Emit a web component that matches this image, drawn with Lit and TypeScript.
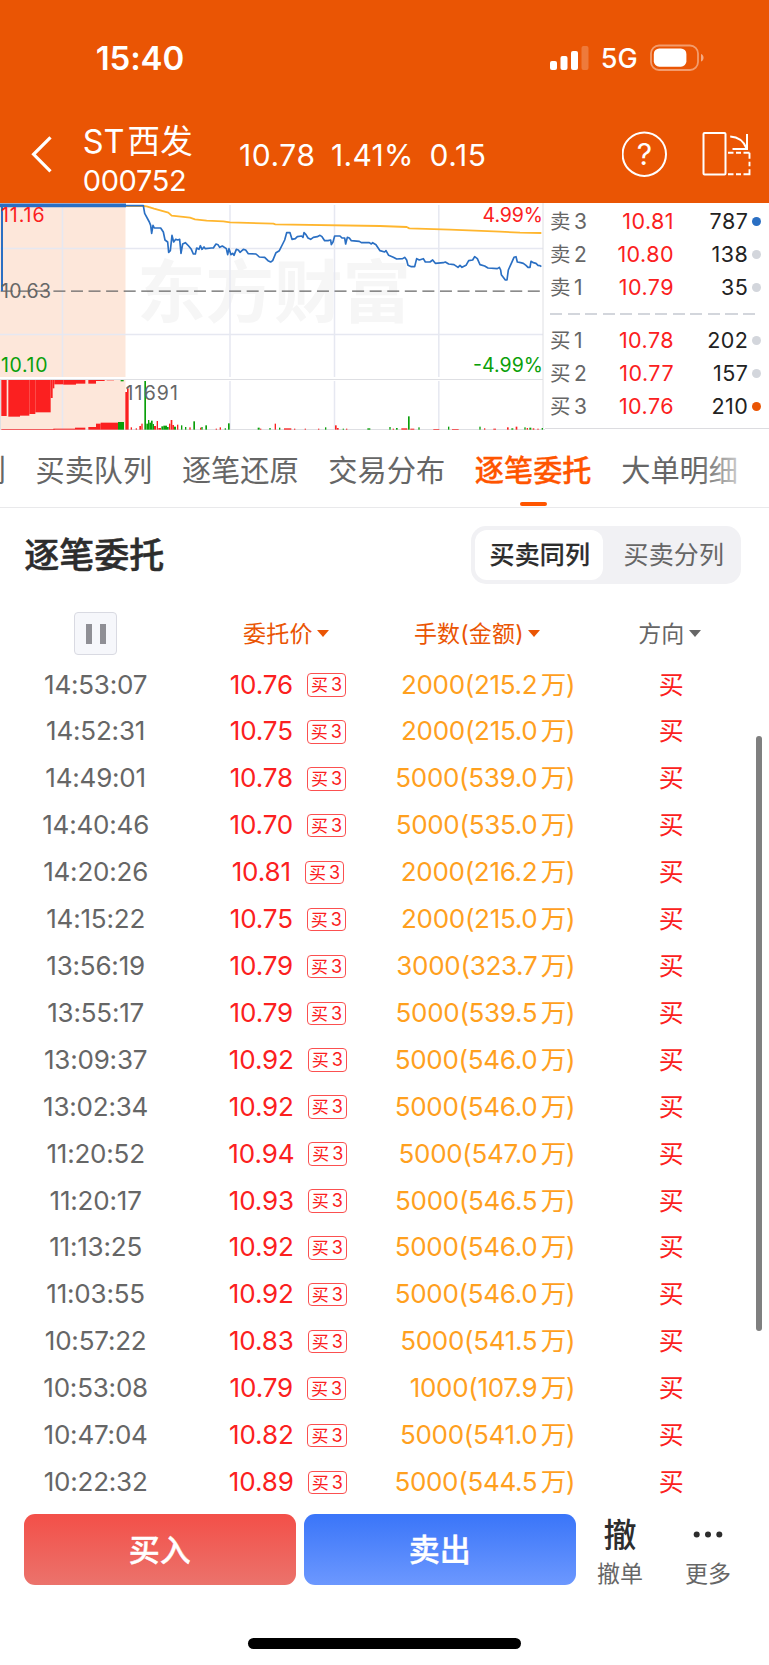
import { LitElement, html, css, svg } from "lit";
import { customElement, property } from "lit/decorators.js";
import { classMap } from "lit/directives/class-map.js";

const RED = "#fb2020";
const GREEN = "#0a9f0a";

const PRICE_LINE =
  "378,17 430,17 434,40 448,66 452,76 455,100 459,76 463,84 482,84 490,96 495,120 503,126 506,157 511,152 516,106 521,126 527,118 534,120 539,118 543,160 548,132 556,128 566,138 574,148 580,162 586,162 590,144 597,148 601,137 606,148 612,141 616,146 634,144 640,144 648,132 654,134 659,142 667,138 679,146 683,164 687,146 693,164 698,160 702,166 709,148 715,150 720,157 730,148 737,150 745,161 768,162 778,171 794,172 804,182 812,186 818,182 828,158 838,152 848,132 854,120 860,98 870,98 876,118 886,116 892,110 905,108 909,112 912,98 918,104 924,114 932,118 940,112 952,110 960,106 966,110 974,122 984,122 992,120 994,134 999,126 1004,108 1020,108 1026,114 1034,114 1037,132 1042,112 1048,114 1054,122 1078,124 1084,128 1108,128 1114,132 1118,128 1128,134 1140,152 1154,156 1158,152 1166,166 1180,172 1190,177 1208,176 1214,172 1220,180 1224,196 1234,200 1244,200 1250,176 1258,180 1270,176 1276,186 1290,186 1298,180 1306,190 1330,188 1336,186 1346,192 1362,194 1374,202 1380,196 1386,202 1398,196 1406,182 1418,180 1424,170 1432,176 1440,194 1454,198 1464,204 1492,206 1498,202 1502,210 1504,224 1516,240 1521,240 1525,210 1534,190 1542,172 1548,170 1552,186 1562,188 1570,190 1578,196 1584,202 1590,202 1593,184 1600,188 1608,190 1614,196 1620,197 1624,200";
const AVG_LINE =
  "378,18 430,18 440,19 462,26 505,38 515,47 570,53 585,58 620,62 670,64 690,67 820,71 826,73 1140,78 1220,81 1228,85 1350,89 1500,95 1560,98 1624,99";

/* Auction volume hanging from the top edge: x, width, bottom */
const HANGING: [number, number, number][] = [
  [4, 16, 648], [25, 35, 650], [60, 28, 647], [88, 18, 642], [106, 46, 637], [152, 6, 594],
  [158, 5, 565], [163, 27, 553], [190, 38, 554], [228, 28, 551], [265, 23, 551], [288, 26, 543], [320, 22, 541],
];
/* Volume bars standing on the base line: x, width, top, up? */
const STANDING: [number, number, number, number][] = [
  [4, 160, 687, 1], [160, 65, 686, 1], [225, 31, 683, 1], [265, 23, 681, 1], [288, 14, 671, 1], [302, 52, 668, 1],
  [354, 18, 666, 0], [376, 5, 576, 1], [381, 5, 565, 1], [392, 4, 682, 1], [407, 4, 685, 1], [418, 5, 678, 1],
  [424, 4, 671, 1], [433, 5, 543, 0], [439, 5, 671, 0], [444, 4, 660, 0], [448, 5, 668, 0], [453, 5, 662, 0],
  [458, 4, 672, 0], [462, 6, 678, 1], [470, 4, 663, 1], [475, 8, 684, 1], [484, 6, 679, 0], [490, 11, 677, 0],
  [501, 5, 681, 0], [507, 4, 671, 1], [512, 5, 660, 1], [517, 5, 675, 1], [522, 6, 680, 0], [531, 4, 674, 1],
  [543, 4, 676, 0], [555, 4, 681, 0], [568, 4, 682, 1], [580, 5, 664, 0], [600, 4, 683, 1], [604, 4, 681, 0],
  [616, 5, 676, 0], [647, 4, 686, 1], [659, 4, 682, 1], [674, 4, 685, 0], [684, 5, 670, 0], [773, 6, 683, 0],
  [780, 4, 686, 1], [808, 4, 684, 0], [824, 4, 671, 1], [837, 4, 683, 0], [852, 22, 685, 1], [882, 4, 686, 1],
  [914, 4, 686, 1], [954, 4, 686, 1], [975, 4, 682, 0], [1005, 5, 676, 1], [1011, 5, 684, 1], [1028, 4, 686, 0],
  [1038, 4, 686, 1], [1102, 9, 685, 0], [1168, 4, 681, 0], [1178, 4, 686, 1], [1188, 5, 684, 0], [1204, 18, 685, 1],
  [1224, 5, 649, 0], [1231, 12, 686, 1], [1255, 4, 682, 0], [1300, 18, 687, 1], [1344, 4, 680, 0], [1356, 20, 687, 1],
  [1438, 4, 680, 0], [1452, 4, 685, 1], [1480, 8, 686, 1], [1521, 5, 682, 1], [1534, 6, 685, 0], [1547, 5, 680, 1],
  [1573, 4, 682, 0], [1580, 4, 684, 1], [1588, 6, 683, 0], [1598, 5, 685, 1], [1612, 4, 686, 1], [1625, 4, 684, 0],
];

const shared = css`
  :host {
    font-family: Inter, "Noto Sans CJK SC", sans-serif;
    font-weight: 400;
    white-space: nowrap;
  }
`;

@customElement("status-header")
class StatusHeader extends LitElement {
  static styles = [shared, css`
    :host { display: block; height: 203px; background: #ea5504; color: #fff; }
    .status { display: flex; align-items: center; height: 115px; padding-left: 95.7px; font: 600 33px/40px Inter; letter-spacing: -0.1px; }
    .clock { width: 454.500px; }
    .net { font: 500 27px/34px Inter; margin-left: 11.500px; width: 49.3px; letter-spacing: 0; padding-top: 2px; }
    .nav { display: flex; height: 88px; }
    .back { padding: 20px 0 0 31px; width: 51.7px; }
    .name { width: 156.3px; padding-top: 6.8px; }
    .stock { font-size: 32.500px; line-height: 40px; }
    .cjk { margin-left: 3px; letter-spacing: 0.3px; }
    .code { font-size: 29px; line-height: 38.500px; letter-spacing: -0.35px; }
    .figures { display: flex; width: 383px; font-size: 30px; line-height: 80px; letter-spacing: 0.6px; }
    .f1 { width: 92px; }
    .f2 { width: 98.5px; letter-spacing: 0.3px; }
    .icons { padding-top: 14px; }
  `];
  render() {
    return html`
      <div class="status">
        <div class="clock">15:40</div>
        <svg width="39" height="26" viewBox="0 0 39 26" fill="#fff">
          <rect y="16" width="7" height="9" rx="2" /><rect x="10.5" y="11" width="7" height="14" rx="2" />
          <rect x="21" y="6" width="7" height="19" rx="2" /><rect x="31.5" y="1" width="7" height="24" rx="2" opacity=".22" />
        </svg>
        <div class="net">5G</div>
        <svg width="56" height="28" viewBox="0 0 56 28">
          <rect x="1" y="1.5" width="47" height="24.5" rx="8" fill="none" stroke="#fff" stroke-opacity=".42" stroke-width="1.8" />
          <rect x="3.8" y="4.5" width="32.6" height="18.2" rx="5.5" fill="#fff" />
          <path d="M51 10c3.4 1.2 3.4 6.400 0 7.600z" fill="#fff" opacity=".5" />
        </svg>
      </div>
      <div class="nav">
        <div class="back">
          <svg width="22" height="40" viewBox="0 0 22 40"><path d="M19.500 2.300 2.600 19.300 19.500 36.300" fill="none" stroke="#fff" stroke-width="3.200" /></svg>
        </div>
        <div class="name">
          <div class="stock">ST<span class="cjk">西发</span></div>
          <div class="code">000752</div>
        </div>
        <div class="figures"><span class="f1">10.78</span><span class="f2">1.41%</span><span>0.15</span></div>
        <svg class="icons" width="132" height="60" viewBox="0 0 132 60" fill="none" stroke="#fff" stroke-width="2">
          <circle cx="22.300" cy="25.200" r="21.700" />
          <text x="22.500" y="36" text-anchor="middle" font-family="Inter" font-size="30" fill="#fff" stroke="none">?</text>
          <rect x="81.500" y="4" width="22" height="41.500" rx="1" />
          <path d="M106 23.800h5.500m2.500 0h5m2.500 0h6m0 0v6m0 3v4.500m0 3v5h-6m-2.500 0h-5m-2.500 0H106" stroke-width="1.900" />
          <path d="M108.200 7.400c8 .4 13.500 4.500 16.300 12M125 5v15H110.500" />
        </svg>
      </div>`;
  }
}

@customElement("minute-chart")
class MinuteChart extends LitElement {
  static styles = [shared, css`
    :host { display: block; width: 545px; height: 227px; }
    svg { display: block; }
    text { font-size: 19.500px; }
    .mark { font-family: "Noto Sans CJK SC", sans-serif; font-weight: 700; font-size: 68.500px; }
  `];
  render() {
    return html`<svg width="545" height="227" viewBox="0 203 545 227">
      <rect x="0" y="203" width="545" height="227" fill="#fff" />
      <text class="mark" x="137" y="317" fill="#f6f6f6">东方财富</text>
      <rect x="0" y="203" width="125.500" height="174" fill="#fde7da" />
      <rect x="0" y="380" width="125.500" height="49.500" fill="#fde7da" />
      <path d="M0 248.500H543M0 334.400H543M62.500 205V377M62.500 381V429M230 205V377M230 381V429M334.500 205V377M334.500 381V429M438.800 205V377M438.800 381V429" stroke="#e6e8f1" stroke-width="1.500" fill="none" />
      <path d="M0 379.500H543M.5 380V429M543 203V429.500M0 429.500H545" stroke="#dedfe3" stroke-width="1" fill="none" />
      <path d="M.7 291.200H543" stroke="#666" stroke-width="1.200" stroke-dasharray="12 5.570" />
      <g transform="translate(0 200) scale(.33333)" fill="none" stroke-linejoin="round">
        ${HANGING.map(([x, w, b]) => svg`<rect x=${x} y="540" width=${w} height=${b - 540} fill=${RED} />`)}
        <rect x="362" y="540" width="9" height="4" fill=${GREEN} />
        ${STANDING.map(([x, w, t, up]) => svg`<rect x=${x} y=${t} width=${w} height=${689 - t} fill=${up ? RED : GREEN} />`)}
        <path d="M378 18H430" stroke="#2a6fc3" stroke-width="4" />
        <polyline points=${AVG_LINE} stroke="#ffb62e" stroke-width="5.500" />
        <polyline points=${PRICE_LINE} stroke="#2a6fc3" stroke-width="5" />
        <path d="M0 16H378" stroke="#2a6fc3" stroke-width="11" />
        <path d="M6 16V273" stroke="#2a6fc3" stroke-width="6" />
      </g>
      <text x="1" y="222.300" fill=${RED} textLength="43.500">11.16</text>
      <text x="1" y="297.500" fill="#666" textLength="50">10.63</text>
      <text x="1" y="372" fill=${GREEN} textLength="46.500">10.10</text>
      <text x="482.500" y="222.300" fill=${RED} textLength="60.500">4.99%</text>
      <text x="473" y="372" fill=${GREEN} textLength="70">-4.99%</text>
      <text x="125.500" y="400" fill="#666" textLength="52.500">11691</text>
    </svg>`;
  }
}

@customElement("order-book")
class OrderBook extends LitElement {
  static styles = [shared, css`
    :host { display: flex; flex-direction: column; flex: 1; height: 226px; box-sizing: border-box; border-bottom: 1px solid #dcdce0; padding: 1.5px 8px 0 5px; }
    .row { display: grid; grid-template-columns: 58px 66px 74.300px 13px; align-items: center; height: 33.150px; line-height: 33px; font-size: 21.500px; letter-spacing: 0.450px; flex: none; }
    .label { color: #666; font-size: 20.500px; }
    .n { margin-left: 3px; font-size: 21px; }
    .price { color: #fb2020; text-align: right; }
    .vol { color: #222; text-align: right; }
    .dot { width: 9px; height: 9px; border-radius: 50%; background: #d3d6dc; margin-left: 3.400px; }
    .blue { background: #2a6fc3; }
    .orange { background: #ea5504; }
    .split { height: 2px; flex: none; margin: 9px 0 9px 0; background: repeating-linear-gradient(90deg, #d3d6dc 0 12px, transparent 12px 17.550px); width: 206px; }
  `];
  private row(side: string, n: number, price: string, vol: string, dot = "") {
    return html`<div class="row">
      <span class="label">${side}<span class="n">${n}</span></span>
      <span class="price">${price}</span><span class="vol">${vol}</span>
      <i class=${classMap({ dot: true, blue: dot === "blue", orange: dot === "orange" })}></i>
    </div>`;
  }
  render() {
    return html`
      ${this.row("卖", 3, "10.81", "787", "blue")}
      ${this.row("卖", 2, "10.80", "138")}
      ${this.row("卖", 1, "10.79", "35")}
      <div class="split"></div>
      ${this.row("买", 1, "10.78", "202")}
      ${this.row("买", 2, "10.77", "157")}
      ${this.row("买", 3, "10.76", "210", "orange")}`;
  }
}

const ORDERS: [string, string, string, string][] = [
  ["14:53:07", "10.76", "2000", "215.2"], ["14:52:31", "10.75", "2000", "215.0"], ["14:49:01", "10.78", "5000", "539.0"],
  ["14:40:46", "10.70", "5000", "535.0"], ["14:20:26", "10.81", "2000", "216.2"], ["14:15:22", "10.75", "2000", "215.0"],
  ["13:56:19", "10.79", "3000", "323.7"], ["13:55:17", "10.79", "5000", "539.5"], ["13:09:37", "10.92", "5000", "546.0"],
  ["13:02:34", "10.92", "5000", "546.0"], ["11:20:52", "10.94", "5000", "547.0"], ["11:20:17", "10.93", "5000", "546.5"],
  ["11:13:25", "10.92", "5000", "546.0"], ["11:03:55", "10.92", "5000", "546.0"], ["10:57:22", "10.83", "5000", "541.5"],
  ["10:53:08", "10.79", "1000", "107.9"], ["10:47:04", "10.82", "5000", "541.0"], ["10:22:32", "10.89", "5000", "544.5"],
];

@customElement("order-table")
class OrderTable extends LitElement {
  static styles = [shared, css`
    :host { display: block; height: 903.700px; }
    .head, .row { display: grid; grid-template-columns: 192.250px 192.250px 192.250px 192.250px; align-items: center; }
    .head { height: 55.500px; padding-top: 4px; font-size: 23px; line-height: 34px; color: #666; letter-spacing: 0.2px; }
    .head > div, .mid { display: flex; align-items: center; justify-content: center; }
    .head .hot { color: #ea5504; }
    .tri { border: 6px solid transparent; border-top: 7px solid currentColor; border-bottom: 0; margin-left: 4.500px; }
    .pause { box-sizing: border-box; width: 43px; height: 43px; border: 1.500px solid #d9dae2; border-radius: 4px; background: #f6f7fb; display: flex; align-items: center; justify-content: center; gap: 8px; margin-right: 1px; }
    .pause i { width: 6px; height: 20px; background: #8f8f95; }
    .row { height: 46.920px; line-height: 46.800px; font-size: 26px; }
    .time { color: #666; text-align: center; letter-spacing: -0.200px; padding-right: 1px; }
    .price { color: #fb2020; letter-spacing: -0.1px; }
    .tag { box-sizing: border-box; height: 23.500px; width: 39.300px; margin: 0 1px 0 13.800px; border: 1.300px solid #fb5050; border-radius: 4px; color: #fb2020; font-size: 17px; line-height: 22px; text-align: center; }
    .tag span { margin-left: 3px; font-size: 18px; }
    .amount { color: #ffa01e; text-align: right; padding-right: 1.500px; letter-spacing: -0.300px; }
    .wan { margin: 0 0 0 3.500px; font-size: 25.500px; }
    .dir { color: #fb2020; text-align: center; font-size: 25px; padding-right: 3px; }
    .h2 { padding-right: 4.500px; } .h3 { padding-right: 7px; } .h4 { padding-right: 6.500px; }
  `];
  render() {
    return html`
      <div class="head">
        <div><div class="pause"><i></i><i></i></div></div>
        <div class="hot h2">委托价<i class="tri"></i></div>
        <div class="hot h3">手数(金额)<i class="tri"></i></div>
        <div class="h4">方向<i class="tri"></i></div>
      </div>
      ${ORDERS.map(([time, price, lots, sum]) => html`<div class="row">
        <div class="time">${time}</div>
        <div class="mid"><span class="price">${price}</span><div class="tag">买<span>3</span></div></div>
        <div class="amount">${lots}(${sum}<span class="wan">万</span>)</div>
        <div class="dir">买</div>
      </div>`)}`;
  }
}

@customElement("app-root")
class AppRoot extends LitElement {
  @property() active = "逐笔委托";
  static styles = [shared, css`
    :host { display: flex; flex-direction: column; position: relative; width: 769px; height: 1665px; background: #fff; overflow: hidden; }
    .quote { display: flex; height: 227px; }
    .tabs { box-sizing: border-box; display: flex; gap: 29.700px; height: 78px; border-bottom: 1px solid #e9e9eb; font-size: 29.200px; line-height: 81px; color: #666; position: relative; overflow: hidden; }
    .tab { display: flex; flex-direction: column; align-items: center; flex: none; height: 77px; }
    .first { width: 5.800px; align-items: flex-end; overflow: hidden; }
    .on { color: #ff5500; font-weight: 500; -webkit-text-stroke: 0.3px; }
    .on::after { content: ""; width: 27px; height: 4px; border-radius: 2px; background: #ff5500; margin-top: -9px; }
    .fade { position: absolute; right: 0; top: 0; width: 70px; height: 76px; background: linear-gradient(90deg, rgba(255, 255, 255, 0), #fff 85%); }
    .heading { display: flex; align-items: center; justify-content: space-between; height: 94px; padding: 0 28.500px 0 24.300px; }
    .title { font-size: 35px; font-weight: 500; color: #2d2d2d; line-height: 50px; -webkit-text-stroke: 0.5px; }
    .seg { display: flex; box-sizing: border-box; width: 269.500px; height: 58px; padding: 4px; border-radius: 15px; background: #f1f1f4; font-size: 25px; line-height: 50px; color: #666; letter-spacing: 0.150px; }
    .seg div { box-sizing: border-box; flex: none; width: 127.500px; padding-left: 14.500px; }
    .seg div + div { width: 134px; padding-left: 21px; }
    .seg .sel { background: #fff; border-radius: 12px; color: #2d2d2d; font-weight: 500; -webkit-text-stroke: 0.2px; }
    .actions { display: flex; padding: 8.300px 0 0 23.500px; height: 71px; }
    .btn { flex: none; width: 272.500px; height: 71px; border-radius: 11px; margin-right: 7.500px; color: #fff; font-weight: 500; font-size: 31px; line-height: 71px; text-align: center; -webkit-text-stroke: 0.4px; }
    .buy { background: linear-gradient(#f34f48, #eb736c); }
    .sell { background: linear-gradient(#3a75f9, #6c98fe); margin-right: 0; }
    .act { width: 88px; text-align: center; font-size: 23px; line-height: 34px; color: #666; }
    .act .big { font-size: 33px; font-weight: 500; color: #2d2d2d; height: 43px; line-height: 42px; }
    .act svg { display: block; margin: 0 auto; }
    .home { width: 273.500px; height: 10.500px; border-radius: 6px; background: #000; margin: 53.500px 0 0 247.500px; }
    .scroll { position: absolute; left: 756px; top: 736px; width: 6px; height: 595px; border-radius: 3px; background: #7f7f7f; }
  `];
  render() {
    return html`
      <status-header></status-header>
      <div class="quote"><minute-chart></minute-chart><order-book></order-book></div>
      <div class="tabs">
        <div class="tab first">列</div>
        ${["买卖队列", "逐笔还原", "交易分布", "逐笔委托", "大单明细"].map(
          (t) => html`<div class=${classMap({ tab: true, on: t === this.active })}>${t}</div>`
        )}
        <div class="fade"></div>
      </div>
      <div class="heading">
        <div class="title">逐笔委托</div>
        <div class="seg"><div class="sel">买卖同列</div><div>买卖分列</div></div>
      </div>
      <order-table></order-table>
      <div class="actions">
        <div class="btn buy">买入</div>
        <div class="btn sell">卖出</div>
        <div class="act">
          <div class="big">撤</div>
          撤单
        </div>
        <div class="act">
          <div class="big"><svg width="30" height="40" viewBox="0 0 30 40" fill="#2d2d2d">
            <circle cx="3.700" cy="20.500" r="3" /><circle cx="15" cy="20.500" r="3" /><circle cx="26.300" cy="20.500" r="3" />
          </svg></div>
          更多
        </div>
      </div>
      <div class="home"></div>
      <div class="scroll"></div>`;
  }
}
